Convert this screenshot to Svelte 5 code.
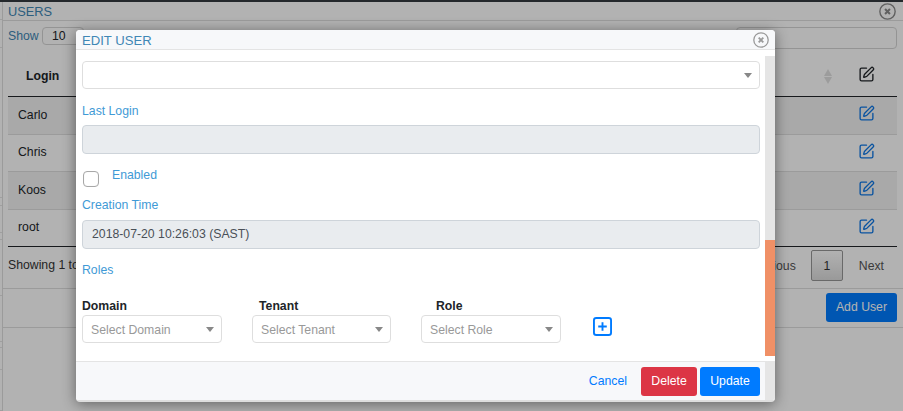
<script>
  const rows = ['Carlo', 'Chris', 'Koos', 'root'];
  const stripCells = [18, 28, 150, 8, 27, 7, 56, 46, 6, 22, 41];
  const filters = [
    { label: 'Domain', placeholder: 'Select Domain', cls: 'f-domain' },
    { label: 'Tenant', placeholder: 'Select Tenant', cls: 'f-tenant' },
    { label: 'Role', placeholder: 'Select Role', cls: 'f-role' }
  ];
</script>

{#snippet editIcon()}
  <svg class="edit" viewBox="0 0 24 24" fill="none" stroke="currentColor" stroke-width="1.9" stroke-linecap="round" stroke-linejoin="round">
    <path d="M12 3H5a2 2 0 0 0-2 2v14a2 2 0 0 0 2 2h14a2 2 0 0 0 2-2v-7" />
    <path d="M18.375 2.625a1 1 0 0 1 3 3l-9.013 9.014a2 2 0 0 1-.853.505l-2.873.84a.5.5 0 0 1-.62-.62l.84-2.873a2 2 0 0 1 .506-.852z" />
  </svg>
{/snippet}

{#snippet closeIcon()}
  <svg class="close" viewBox="0 0 16 16" fill="none">
    <circle cx="8" cy="8" r="7.2" stroke="currentColor" stroke-width="1.3" />
    <path d="M5.7 5.7l4.6 4.6M10.3 5.7l-4.6 4.6" stroke="currentColor" stroke-width="1.9" />
  </svg>
{/snippet}

<div class="page">
  <div class="topbar"></div>
  <div class="shell">
    <div class="strip">
      {#each stripCells as h}
        <div class="strip-cell" style="height: {h}px"></div>
      {/each}
    </div>
    <main class="panel">
      <header class="panel-head">
        <span>USERS</span>
        {@render closeIcon()}
      </header>
      <div class="panel-body">
        <div class="controls">
          <span class="show">Show</span>
          <span class="len">10</span>
          <span class="search"></span>
        </div>
        <div class="thead">
          <b>Login</b>
          <span class="sort"><i class="up"></i><i class="down"></i></span>
          <span class="act">{@render editIcon()}</span>
        </div>
        <div class="tbody">
          {#each rows as name, i}
            <div class="row" class:odd={i % 2 === 0} class:last={i === 3}>
              <span>{name}</span>
              <span class="act blue">{@render editIcon()}</span>
            </div>
          {/each}
        </div>
        <div class="tfoot">
          <span>Showing 1 to 4 of 4 entries</span>
          <div class="pager">
            <span>Previous</span>
            <span class="current">1</span>
            <span>Next</span>
          </div>
        </div>
      </div>
      <div class="panel-foot">
        <button class="add">Add User</button>
      </div>
    </main>
  </div>

  <div class="overlay"></div>

  <section class="modal">
    <header class="modal-head">
      <span>EDIT USER</span>
      {@render closeIcon()}
    </header>
    <div class="modal-main">
      <div class="form">
        <div class="select big"><i class="caret"></i></div>
        <label class="lbl l-login" for="last">Last Login</label>
        <div class="input" id="last"></div>
        <div class="check-row">
          <span class="check"></span>
          <span class="lbl">Enabled</span>
        </div>
        <div class="lbl l-created">Creation Time</div>
        <div class="input">2018-07-20 10:26:03 (SAST)</div>
        <div class="lbl l-roles">Roles</div>
        <div class="filters">
          {#each filters as f}
            <div class="filter {f.cls}">
              <b>{f.label}</b>
              <div class="select small"><span>{f.placeholder}</span><i class="caret"></i></div>
            </div>
          {/each}
          <svg class="plus" viewBox="0 0 20 20" fill="none" stroke="#007bff" stroke-width="2">
            <rect x="1" y="1" width="18" height="18" rx="2.5" />
            <path d="M10 5.5v9M5.5 10h9" />
          </svg>
        </div>
      </div>
      <div class="scroll"><div class="thumb"></div></div>
    </div>
    <footer class="modal-foot">
      <span class="cancel">Cancel</span>
      <button class="delete">Delete</button>
      <button class="update">Update</button>
    </footer>
  </section>
</div>

<style>
  :global(body) { margin: 0; }
  .page {
    position: relative;
    width: 903px;
    height: 411px;
    overflow: hidden;
    background: #fff;
    font: 12.25px/15px "Liberation Sans", Arial, sans-serif;
    color: #212529;
  }
  .topbar { height: 2px; background: #343a40; }
  .shell { display: flex; height: 409px; }
  .strip { width: 3px; flex: none; box-sizing: border-box; border-right: 1px solid #dedede; }
  .strip-cell { border-bottom: 1px solid #e4e4e4; box-sizing: border-box; }
  .panel { flex: 1; background: #fff; }
  .panel-head {
    height: 18px;
    border-bottom: 1px solid #dfdfdf;
    display: flex;
    align-items: center;
    justify-content: space-between;
    padding: 0 7px 0 5px;
    font-size: 12.8px;
    color: #3f87b5;
  }
  .panel-head > span { padding-top: 1px; }
  .panel-head .close { color: #8a8a8a; }
  .panel-body { padding: 6px 6px 0 5px; }
  .controls { display: flex; align-items: flex-start; height: 29px; }
  .show { color: #3f87b5; margin-top: 2px; width: 34px; }
  .len {
    width: 42px; height: 18px; box-sizing: border-box;
    border: 1px solid #d5d5d5; border-radius: 4px;
    padding: 1px 0 0 9px;
  }
  .search {
    margin-left: auto; width: 161px; height: 22px; box-sizing: border-box;
    border: 1px solid #d5d5d5; border-radius: 4px;
  }
  .thead {
    height: 40px;
    display: flex;
    align-items: center;
    padding: 0 0 0 18px;
    border-bottom: 1px solid #212529;
  }
  .sort { margin-left: auto; margin-right: 3px; display: flex; flex-direction: column; gap: 1px; }
  .sort i { display: block; width: 0; height: 0; border-left: 4.5px solid transparent; border-right: 4.5px solid transparent; }
  .sort .up { border-bottom: 7px solid #e0e0e0; }
  .sort .down { border-top: 7px solid #e0e0e0; }
  .act { width: 62px; display: flex; justify-content: center; }
  .edit { width: 17px; height: 17px; display: block; margin-bottom: 3px; }
  .blue { color: #0f78e6; }
  .row {
    height: 37.5px;
    box-sizing: border-box;
    display: flex;
    align-items: center;
    justify-content: space-between;
    padding-left: 10px;
    border-bottom: 1px solid #dedede;
  }
  .row.odd { background: #f2f2f2; }
  .row.last { border-bottom-color: #212529; }
  .tfoot { height: 41px; display: flex; justify-content: space-between; align-items: flex-start; }
  .tfoot > span { margin-top: 11px; color: #333; }
  .pager { display: flex; align-items: flex-start; color: #555; margin-top: 3px; }
  .pager > span:first-child { margin-top: 9px; }
  .pager > span:last-child { margin: 9px 13px 0 16px; }
  .current {
    width: 32px; height: 31px; box-sizing: border-box; margin-left: 15px;
    border: 1px solid #979797; border-radius: 2px;
    background: linear-gradient(#fff, #dcdcdc);
    text-align: center; padding-top: 8px; color: #333;
  }
  .panel-foot {
    border-top: 1px solid #dedede;
    border-bottom: 1px solid #dedede;
    height: 38px;
    padding: 0 6px 0 0;
    display: flex;
    justify-content: flex-end;
    align-items: flex-start;
  }
  button {
    border: 0; font: inherit; color: #fff; border-radius: 3px; height: 29px; padding: 0;
  }
  .add { background: #007bff; width: 71px; margin-top: 4px; }
  .overlay { position: absolute; inset: 0; background: rgba(0, 0, 0, 0.3); }
  .modal {
    position: absolute;
    left: 76px; top: 30px;
    width: 699px; height: 372px;
    box-sizing: border-box;
    display: flex; flex-direction: column;
    background: #fff;
    border-radius: 4px;
    box-shadow: 0 2px 14px rgba(0, 0, 0, 0.45);
    border-bottom: 2px solid #dedede;
    overflow: hidden;
  }
  .modal-head {
    height: 19px; flex: none;
    display: flex; align-items: center; justify-content: space-between;
    padding: 0 6px 0 6px;
    background: #f7f8fa;
    border-bottom: 1px solid #e4e4e4;
    font-size: 13.1px; color: #3f87b5;
  }
  .modal-head > span { padding-top: 1px; }
  .modal-head .close { width: 16px; height: 16px; }
  .close { width: 17px; height: 17px; color: #9a9a9a; display: block; }
  .modal-main { flex: 1; display: flex; min-height: 0; }
  .form { flex: 1; padding: 11px 5px 0 6px; min-width: 0; }
  .scroll {
    width: 10px; flex: none; margin: 6px 0 5px;
    background: #e5e5e5; display: flex; flex-direction: column; justify-content: flex-end;
  }
  .thumb { height: 116px; background: #f09066; }
  .select, .input {
    box-sizing: border-box; border-radius: 4px; position: relative;
  }
  .select { border: 1px solid #dedede; background: #fff; }
  .select.big { height: 28px; }
  .caret {
    position: absolute; right: 7px; top: 50%; margin-top: -2px;
    width: 0; height: 0;
    border-left: 4px solid transparent; border-right: 4px solid transparent;
    border-top: 5px solid #888;
  }
  .input {
    height: 29px; background: #e9ecef; border: 1px solid #ced4da;
    color: #495057; padding: 6px 9px;
  }
  .lbl { display: block; color: #3f9ad6; }
  .l-login { margin: 15px 0 6px; }
  .check-row { display: flex; align-items: flex-start; margin: 13px 0 0 1px; height: 25px; }
  .check {
    width: 16px; height: 16px; box-sizing: border-box; margin-top: 4px;
    border: 1px solid #a8a8a8; border-radius: 4px;
    box-shadow: inset 0 0 1px rgba(0,0,0,.15);
  }
  .check-row .lbl { margin-left: 13px; margin-top: 1px; }
  .l-created { margin: 0 0 7px; padding-top: 6px; }
  .l-roles { margin-top: 14px; }
  .filters { display: flex; align-items: flex-start; margin-top: 22px; }
  .filter b { display: block; height: 15px; line-height: 13px; }
  .select.small { height: 28px; color: #999; padding: 7px 8px; }
  .f-domain { width: 140px; }
  .f-tenant { width: 139px; margin-left: 30px; }
  .f-tenant b { padding-left: 7px; }
  .f-role { width: 140px; margin-left: 30px; }
  .f-role b { padding-left: 15px; }
  .plus { width: 19px; height: 19px; margin: 17px 0 0 32px; flex: none; }
  .modal-foot {
    flex: none; height: 39px; box-sizing: border-box;
    display: flex; align-items: center; justify-content: flex-end;
    background: #f7f8fa;
    border-top: 1px solid #e4e4e4;
    border-right: 10px solid #e5e5e5;
    padding: 0 5px 0 0;
  }
  .cancel { color: #007bff; margin-right: 14px; }
  .delete { background: #dc3545; width: 56px; margin-right: 3px; }
  .update { background: #007bff; width: 60px; }
</style>
